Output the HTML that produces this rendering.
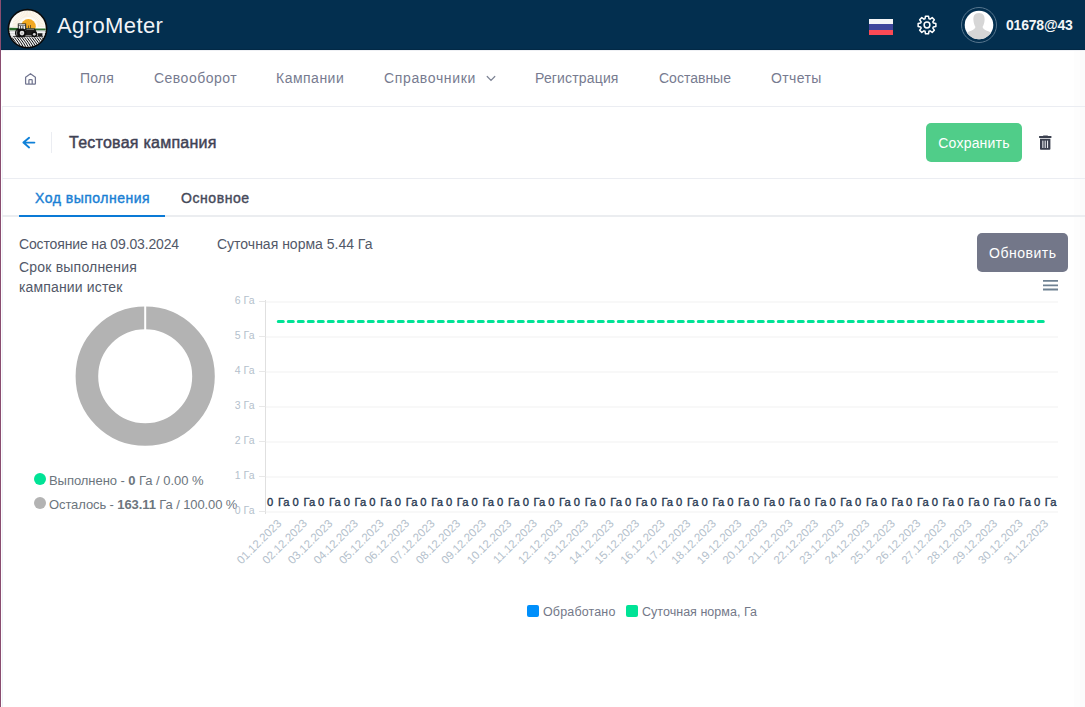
<!DOCTYPE html>
<html><head><meta charset="utf-8">
<style>
*{margin:0;padding:0;box-sizing:border-box}
html,body{width:1085px;height:707px;overflow:hidden;background:#fff;font-family:"Liberation Sans",sans-serif;position:relative}
.abs{position:absolute;white-space:nowrap}
#lb{position:absolute;left:0;top:0;width:1px;height:707px;background:#8a4d70;z-index:5}
#lb2{position:absolute;left:2px;top:107px;width:1px;height:600px;background:#eef2f7}
#rs1{position:absolute;left:1074px;top:50px;width:6px;height:657px;background:#fdfdfd}
#rs2{position:absolute;left:1080px;top:50px;width:5px;height:657px;background:#fbfbfb}
#hdr{position:absolute;left:1px;top:0;width:1084px;height:50px;background:#032f4f;border-bottom:1px solid #022946}
.brand{left:57px;top:12.5px;font-size:22px;letter-spacing:0.4px;color:#f2f4f7;line-height:26px}
.nav{top:70px;font-size:14px;color:#777b90;line-height:16px}
#navline{position:absolute;left:2px;top:106px;width:1083px;height:1px;background:#ebedf2}
#titleline{position:absolute;left:2px;top:178px;width:1083px;height:1px;background:#ebedf2}
#tabline{position:absolute;left:2px;top:215px;width:1083px;height:2px;background:#ebedf0}
#tabact{position:absolute;left:19px;top:215px;width:146px;height:2px;background:#0a7ad6}
.title{left:69px;top:134px;font-size:16px;font-weight:normal;-webkit-text-stroke:0.45px #3f4254;letter-spacing:0.25px;color:#3f4254;line-height:18px}
.tab{top:190px;font-size:14px;font-weight:normal;-webkit-text-stroke:0.4px currentColor;line-height:16px}
.btn{position:absolute;border-radius:5px;color:#fff;font-size:14px;text-align:center}
.txt{font-size:14px;color:#525868;line-height:16px}
.leg{font-size:13px;color:#6c757d;line-height:15px}
</style></head><body>
<div id="rs1"></div><div id="rs2"></div><div id="lb"></div><div id="lb2"></div>
<div id="hdr"></div><div class="abs" style="left:1px;top:50px;width:1084px;height:1px;background:#eef0f4"></div>
<!-- logo -->
<svg class="abs" style="left:7px;top:8px" width="42" height="42" viewBox="0 0 42 42">
  <defs><clipPath id="lc"><circle cx="20.5" cy="20.7" r="18.3"/></clipPath></defs>
  <circle cx="20.5" cy="20.7" r="19.9" fill="#0a0a0a"/>
  <g clip-path="url(#lc)">
    <rect x="0" y="0" width="42" height="23" fill="#fdfcf8"/>
    <path d="M12.0 18.4L5.4 18.4 M12.1 17.4L5.5 16.7 M12.2 16.4L5.8 15.0 M12.5 15.4L6.2 13.3 M12.9 14.5L6.9 11.7 M13.3 13.6L7.7 10.2 M13.9 12.7L8.7 8.7 M14.6 11.9L9.8 7.4 M15.3 11.2L11.0 6.2 M16.1 10.6L12.4 5.2 M17.0 10.1L13.9 4.3 M17.9 9.7L15.5 3.5 M18.9 9.3L17.1 3.0 M19.9 9.1L18.8 2.6 M20.9 9.0L20.5 2.4 M21.9 9.0L22.3 2.4 M22.9 9.1L24.0 2.6 M23.9 9.3L25.7 3.0 M24.9 9.7L27.3 3.5 M25.8 10.1L28.9 4.3 M26.7 10.6L30.4 5.2 M27.5 11.2L31.8 6.2 M28.2 11.9L33.0 7.4 M28.9 12.7L34.1 8.7 M29.5 13.6L35.1 10.2 M29.9 14.5L35.9 11.7 M30.3 15.4L36.6 13.3 M30.6 16.4L37.0 15.0 M30.7 17.4L37.3 16.7 M30.8 18.4L37.4 18.4" stroke="#eba555" stroke-width="0.55" opacity="0.3"/>
    <circle cx="21.4" cy="18.4" r="8.4" fill="#fdfcf8"/><circle cx="21.4" cy="18.4" r="7.4" fill="#f2a922"/>
    <path d="M0 19.8 L14 19.9 L28 20.6 L42 20.4 V23 H0z" fill="#2d6a2b"/>
    <rect x="0" y="22.3" width="42" height="7.2" fill="#dcdcdc"/>
    <path d="M0 24.5h42M0 26.8h42" stroke="#f6f6f6" stroke-width="0.9"/>
    <rect x="0" y="29" width="42" height="14" fill="#f2f2f2"/>
    <path d="M-10.0 29.5 Q-6.0 34 -2.0 42 M-7.5 29.5 Q-3.5 34 0.5 42 M-5.0 29.5 Q-1.0 34 3.0 42 M-2.5 29.5 Q1.5 34 5.5 42 M0.0 29.5 Q4.0 34 8.0 42 M2.5 29.5 Q6.5 34 10.5 42 M5.0 29.5 Q9.0 34 13.0 42 M7.5 29.5 Q11.5 34 15.5 42 M10.0 29.5 Q14.0 34 18.0 42 M12.5 29.5 Q16.5 34 20.5 42 M15.0 29.5 Q19.0 34 23.0 42 M17.5 29.5 Q21.5 34 25.5 42 M20.0 29.5 Q24.0 34 28.0 42 M22.5 29.5 Q26.5 34 30.5 42 M25.0 29.5 Q29.0 34 33.0 42 M27.5 29.5 Q31.5 34 35.5 42 M30.0 29.5 Q34.0 34 38.0 42 M32.5 29.5 Q36.5 34 40.5 42 M35.0 29.5 Q39.0 34 43.0 42 M37.5 29.5 Q41.5 34 45.5 42 M40.0 29.5 Q44.0 34 48.0 42 M42.5 29.5 Q46.5 34 50.5 42" stroke="#111" stroke-width="1.0" fill="none"/>
    <!-- tractor -->
    <path d="M10.8 15.4 H19.1 L19.3 22 H10.8z" fill="#141414"/>
    <path d="M11.6 16.3 H18.3 V17.4 H11.6z" fill="#f0f0f0"/>
    <path d="M11.7 17.9 H13.3 V21.3 H11.7z M14 17.9 H15.6 V21.3 H14z M16.3 17.9 H18.2 V21.3 H16.3z" fill="#e8e8e8"/>
    <path d="M21.5 17.5 V20.5 M23.5 17 V20.5" stroke="#222" stroke-width="0.6"/>
    <path d="M18.5 20.5 H27.5 Q29 21 29.2 23 L29.5 27.5 H18.5z" fill="#1c1c1c"/>
    <path d="M19.5 20.8 H27 V21.8 H19.5z" fill="#888"/>
    <ellipse cx="11.6" cy="25" rx="3.6" ry="4.6" fill="#0d0d0d"/>
    <path d="M10 22.5 Q9.2 25 10 27.5" stroke="#ccc" stroke-width="0.7" fill="none"/>
    <circle cx="15" cy="25.1" r="4.5" fill="#0d0d0d"/>
    <circle cx="15" cy="25.1" r="2.3" fill="#e2e2e2"/>
    <circle cx="15" cy="25.1" r="0.7" fill="#777"/>
    <circle cx="27.3" cy="26.3" r="3" fill="#0d0d0d"/>
    <circle cx="27.3" cy="26.3" r="1.4" fill="#d8d8d8"/>
    <path d="M30.8 25.2 H35.4 V28 H30.8z" fill="#1a1a1a"/>
    <path d="M6 28.6 H36" stroke="#111" stroke-width="0.8"/>
  </g>
</svg>
<div class="abs brand">AgroMeter</div>
<!-- flag -->
<div class="abs" style="left:869px;top:19px;width:24px;height:16px">
  <div style="height:5.33px;background:#f5f5f7"></div><div style="height:5.34px;background:#3f469c"></div><div style="height:5.33px;background:#fb4a55"></div>
</div>
<!-- gear -->
<svg class="abs" style="left:916px;top:14px" width="22" height="22" viewBox="0 0 22 22" fill="none" stroke="#ffffff" stroke-width="1.5" stroke-linejoin="round">
  <path d="M9.05 4.69 L9.48 2.13 L12.52 2.13 L12.95 4.69 L14.08 5.16 L16.20 3.65 L18.35 5.80 L16.84 7.92 L17.31 9.05 L19.87 9.48 L19.87 12.52 L17.31 12.95 L16.84 14.08 L18.35 16.20 L16.20 18.35 L14.08 16.84 L12.95 17.31 L12.52 19.87 L9.48 19.87 L9.05 17.31 L7.92 16.84 L5.80 18.35 L3.65 16.20 L5.16 14.08 L4.69 12.95 L2.13 12.52 L2.13 9.48 L4.69 9.05 L5.16 7.92 L3.65 5.80 L5.80 3.65 L7.92 5.16Z"/>
  <circle cx="11" cy="11" r="2.9"/>
</svg>
<!-- avatar -->
<div class="abs" style="left:961px;top:7px;width:36px;height:36px;border-radius:50%;border:1.3px solid #56758d"></div>
<svg class="abs" style="left:964px;top:10px" width="30" height="30" viewBox="0 0 30 30">
  <defs><clipPath id="ac"><circle cx="15" cy="15" r="14.3"/></clipPath></defs>
  <circle cx="15" cy="15" r="14.3" fill="#ffffff"/>
  <g clip-path="url(#ac)" fill="#d6d6d6">
    <path d="M15 3 C19.5 3 20.8 6 20.6 10 C20.4 13 19.5 15.5 18.5 17 C19 19 22 20.5 25 21.5 C27 22.5 28.5 25 29 30 L1 30 C1.5 25 3 22.5 5 21.5 C8 20.5 11 19 11.5 17 C10.5 15.5 9.6 13 9.4 10 C9.2 6 10.5 3 15 3Z"/>
  </g>
</svg>
<div class="abs" style="left:1006px;top:17px;font-size:14px;font-weight:bold;letter-spacing:-0.2px;color:#f4f6f8;line-height:16px">01678@43</div>

<!-- nav -->
<svg class="abs" style="left:24px;top:72px" width="13" height="14" viewBox="0 0 13 14" fill="none" stroke="#717590" stroke-width="1.25" stroke-linejoin="round">
  <path d="M1.6 5.2 L6.5 1.7 L11.4 5.2 V11.4 Q11.4 12 10.8 12 H2.2 Q1.6 12 1.6 11.4z"/><path d="M4.9 12 V8.4 Q4.9 7.7 5.6 7.7 H7.5 Q8.2 7.7 8.2 8.4 V12"/>
</svg>
<div class="abs nav" style="left:80px;letter-spacing:0.15px">Поля</div>
<div class="abs nav" style="left:154px;letter-spacing:0.48px">Севооборот</div>
<div class="abs nav" style="left:276px;letter-spacing:0.49px">Кампании</div>
<div class="abs nav" style="left:384px;letter-spacing:0.65px">Справочники</div>
<svg class="abs" style="left:485px;top:74px" width="12" height="10" viewBox="0 0 12 10" fill="none" stroke="#7d8394" stroke-width="1.2" stroke-linecap="round"><path d="M2.2 2.5 L6 6.5 L9.8 2.5"/></svg>
<div class="abs nav" style="left:535px;letter-spacing:0.16px">Регистрация</div>
<div class="abs nav" style="left:659px">Составные</div>
<div class="abs nav" style="left:771px;letter-spacing:0.4px">Отчеты</div>
<div id="navline"></div>

<!-- title row -->
<svg class="abs" style="left:21px;top:136px" width="15" height="14" viewBox="0 0 15 14" fill="none" stroke="#0f80d8" stroke-width="1.9" stroke-linecap="round" stroke-linejoin="round"><path d="M13.4 6.6 H2.6 M8.1 1.8 L2.4 6.6 L8.1 11.4"/></svg>
<div class="abs" style="left:51px;top:132px;width:1px;height:21px;background:#ebedf2"></div>
<div class="abs title">Тестовая кампания</div>
<div class="btn" style="left:926px;top:123px;width:96px;height:39px;background:#50cd89;line-height:41px;letter-spacing:0.2px">Сохранить</div>
<svg class="abs" style="left:1038px;top:135px" width="15" height="16" viewBox="0 0 15 16" fill="#3a3f4e">
  <path d="M5.4 0.4 H9.6 L10 1 H13.4 V3 H1.1 V1 H5z"/>
  <path d="M2 3.8 H12.4 V13.9 Q12.4 14.7 11.6 14.7 H2.8 Q2 14.7 2 13.9z"/>
  <g fill="#e9ebef"><rect x="4.3" y="5.6" width="1.1" height="7.4"/><rect x="6.65" y="5.6" width="1.1" height="7.4"/><rect x="9" y="5.6" width="1.1" height="7.4"/></g>
</svg>
<div id="titleline"></div>

<!-- tabs -->
<div class="abs tab" style="left:35px;color:#1a7fd4;letter-spacing:0.5px">Ход выполнения</div>
<div class="abs tab" style="left:181px;color:#464a5a;letter-spacing:0.57px">Основное</div>
<div id="tabline"></div>
<div id="tabact"></div>

<!-- content -->
<div class="abs txt" style="left:19px;top:236px;letter-spacing:-0.14px">Состояние на 09.03.2024</div>
<div class="abs txt" style="left:19px;top:259px;letter-spacing:0.2px">Срок выполнения</div>
<div class="abs txt" style="left:19px;top:279px;letter-spacing:0.15px">кампании истек</div>
<div class="abs txt" style="left:217px;top:236px">Суточная норма 5.44 Га</div>
<div class="btn" style="left:977px;top:233px;width:91px;height:39px;background:#737789;line-height:41px;letter-spacing:0.5px;text-indent:0.5px">Обновить</div>

<!-- donut -->
<svg class="abs" style="left:70px;top:301.4px" width="150" height="150" viewBox="0 0 150 150">
  <circle cx="75.2" cy="75.2" r="58.3" fill="none" stroke="#b3b3b3" stroke-width="22.6"/>
  <line x1="75.2" y1="4" x2="75.2" y2="30" stroke="#fff" stroke-width="2"/>
</svg>
<div class="abs" style="left:34px;top:473px;width:12px;height:12px;border-radius:50%;background:#00e396"></div>
<div class="abs leg" style="left:49px;top:473px;letter-spacing:-0.05px">Выполнено - <b>0</b> Га / 0.00 %</div>
<div class="abs" style="left:34px;top:497px;width:12px;height:12px;border-radius:50%;background:#b3b3b3"></div>
<div class="abs leg" style="left:49px;top:497px;letter-spacing:-0.1px">Осталось - <b>163.11</b> Га / 100.00 %</div>

<!-- chart -->
<svg id="chart" class="abs" style="left:0;top:0" width="1085" height="707">
<line x1="265.5" y1="512.0" x2="1058" y2="512.0" stroke="#f1f1f1" stroke-width="1"/>
<line x1="265.5" y1="477.0" x2="1058" y2="477.0" stroke="#f1f1f1" stroke-width="1"/>
<line x1="265.5" y1="442.0" x2="1058" y2="442.0" stroke="#f1f1f1" stroke-width="1"/>
<line x1="265.5" y1="407.0" x2="1058" y2="407.0" stroke="#f1f1f1" stroke-width="1"/>
<line x1="265.5" y1="372.0" x2="1058" y2="372.0" stroke="#f1f1f1" stroke-width="1"/>
<line x1="265.5" y1="337.0" x2="1058" y2="337.0" stroke="#f1f1f1" stroke-width="1"/>
<line x1="265.5" y1="302.0" x2="1058" y2="302.0" stroke="#f1f1f1" stroke-width="1"/>
<line x1="265.5" y1="300.0" x2="265.5" y2="514.0" stroke="#e0e0e0" stroke-width="1"/>
<line x1="259" y1="511.5" x2="265.5" y2="511.5" stroke="#e8e8e8" stroke-width="1"/>
<text x="254.5" y="514.0" text-anchor="end" font-size="10.5" fill="#b4bfcc">0 Га</text>
<line x1="259" y1="476.5" x2="265.5" y2="476.5" stroke="#e8e8e8" stroke-width="1"/>
<text x="254.5" y="479.0" text-anchor="end" font-size="10.5" fill="#b4bfcc">1 Га</text>
<line x1="259" y1="441.5" x2="265.5" y2="441.5" stroke="#e8e8e8" stroke-width="1"/>
<text x="254.5" y="444.0" text-anchor="end" font-size="10.5" fill="#b4bfcc">2 Га</text>
<line x1="259" y1="406.5" x2="265.5" y2="406.5" stroke="#e8e8e8" stroke-width="1"/>
<text x="254.5" y="409.0" text-anchor="end" font-size="10.5" fill="#b4bfcc">3 Га</text>
<line x1="259" y1="371.5" x2="265.5" y2="371.5" stroke="#e8e8e8" stroke-width="1"/>
<text x="254.5" y="374.0" text-anchor="end" font-size="10.5" fill="#b4bfcc">4 Га</text>
<line x1="259" y1="336.5" x2="265.5" y2="336.5" stroke="#e8e8e8" stroke-width="1"/>
<text x="254.5" y="339.0" text-anchor="end" font-size="10.5" fill="#b4bfcc">5 Га</text>
<line x1="259" y1="301.5" x2="265.5" y2="301.5" stroke="#e8e8e8" stroke-width="1"/>
<text x="254.5" y="304.0" text-anchor="end" font-size="10.5" fill="#b4bfcc">6 Га</text>
<text x="278.28" y="505.8" text-anchor="middle" font-size="11.2" fill="#263750" stroke="#263750" stroke-width="0.35" style="word-spacing:1.6px">0 Га</text>
<text x="303.85" y="505.8" text-anchor="middle" font-size="11.2" fill="#263750" stroke="#263750" stroke-width="0.35" style="word-spacing:1.6px">0 Га</text>
<text x="329.41" y="505.8" text-anchor="middle" font-size="11.2" fill="#263750" stroke="#263750" stroke-width="0.35" style="word-spacing:1.6px">0 Га</text>
<text x="354.98" y="505.8" text-anchor="middle" font-size="11.2" fill="#263750" stroke="#263750" stroke-width="0.35" style="word-spacing:1.6px">0 Га</text>
<text x="380.54" y="505.8" text-anchor="middle" font-size="11.2" fill="#263750" stroke="#263750" stroke-width="0.35" style="word-spacing:1.6px">0 Га</text>
<text x="406.10" y="505.8" text-anchor="middle" font-size="11.2" fill="#263750" stroke="#263750" stroke-width="0.35" style="word-spacing:1.6px">0 Га</text>
<text x="431.67" y="505.8" text-anchor="middle" font-size="11.2" fill="#263750" stroke="#263750" stroke-width="0.35" style="word-spacing:1.6px">0 Га</text>
<text x="457.23" y="505.8" text-anchor="middle" font-size="11.2" fill="#263750" stroke="#263750" stroke-width="0.35" style="word-spacing:1.6px">0 Га</text>
<text x="482.80" y="505.8" text-anchor="middle" font-size="11.2" fill="#263750" stroke="#263750" stroke-width="0.35" style="word-spacing:1.6px">0 Га</text>
<text x="508.36" y="505.8" text-anchor="middle" font-size="11.2" fill="#263750" stroke="#263750" stroke-width="0.35" style="word-spacing:1.6px">0 Га</text>
<text x="533.93" y="505.8" text-anchor="middle" font-size="11.2" fill="#263750" stroke="#263750" stroke-width="0.35" style="word-spacing:1.6px">0 Га</text>
<text x="559.49" y="505.8" text-anchor="middle" font-size="11.2" fill="#263750" stroke="#263750" stroke-width="0.35" style="word-spacing:1.6px">0 Га</text>
<text x="585.06" y="505.8" text-anchor="middle" font-size="11.2" fill="#263750" stroke="#263750" stroke-width="0.35" style="word-spacing:1.6px">0 Га</text>
<text x="610.62" y="505.8" text-anchor="middle" font-size="11.2" fill="#263750" stroke="#263750" stroke-width="0.35" style="word-spacing:1.6px">0 Га</text>
<text x="636.19" y="505.8" text-anchor="middle" font-size="11.2" fill="#263750" stroke="#263750" stroke-width="0.35" style="word-spacing:1.6px">0 Га</text>
<text x="661.75" y="505.8" text-anchor="middle" font-size="11.2" fill="#263750" stroke="#263750" stroke-width="0.35" style="word-spacing:1.6px">0 Га</text>
<text x="687.31" y="505.8" text-anchor="middle" font-size="11.2" fill="#263750" stroke="#263750" stroke-width="0.35" style="word-spacing:1.6px">0 Га</text>
<text x="712.88" y="505.8" text-anchor="middle" font-size="11.2" fill="#263750" stroke="#263750" stroke-width="0.35" style="word-spacing:1.6px">0 Га</text>
<text x="738.44" y="505.8" text-anchor="middle" font-size="11.2" fill="#263750" stroke="#263750" stroke-width="0.35" style="word-spacing:1.6px">0 Га</text>
<text x="764.01" y="505.8" text-anchor="middle" font-size="11.2" fill="#263750" stroke="#263750" stroke-width="0.35" style="word-spacing:1.6px">0 Га</text>
<text x="789.57" y="505.8" text-anchor="middle" font-size="11.2" fill="#263750" stroke="#263750" stroke-width="0.35" style="word-spacing:1.6px">0 Га</text>
<text x="815.14" y="505.8" text-anchor="middle" font-size="11.2" fill="#263750" stroke="#263750" stroke-width="0.35" style="word-spacing:1.6px">0 Га</text>
<text x="840.70" y="505.8" text-anchor="middle" font-size="11.2" fill="#263750" stroke="#263750" stroke-width="0.35" style="word-spacing:1.6px">0 Га</text>
<text x="866.27" y="505.8" text-anchor="middle" font-size="11.2" fill="#263750" stroke="#263750" stroke-width="0.35" style="word-spacing:1.6px">0 Га</text>
<text x="891.83" y="505.8" text-anchor="middle" font-size="11.2" fill="#263750" stroke="#263750" stroke-width="0.35" style="word-spacing:1.6px">0 Га</text>
<text x="917.40" y="505.8" text-anchor="middle" font-size="11.2" fill="#263750" stroke="#263750" stroke-width="0.35" style="word-spacing:1.6px">0 Га</text>
<text x="942.96" y="505.8" text-anchor="middle" font-size="11.2" fill="#263750" stroke="#263750" stroke-width="0.35" style="word-spacing:1.6px">0 Га</text>
<text x="968.52" y="505.8" text-anchor="middle" font-size="11.2" fill="#263750" stroke="#263750" stroke-width="0.35" style="word-spacing:1.6px">0 Га</text>
<text x="994.09" y="505.8" text-anchor="middle" font-size="11.2" fill="#263750" stroke="#263750" stroke-width="0.35" style="word-spacing:1.6px">0 Га</text>
<text x="1019.65" y="505.8" text-anchor="middle" font-size="11.2" fill="#263750" stroke="#263750" stroke-width="0.35" style="word-spacing:1.6px">0 Га</text>
<text x="1045.22" y="505.8" text-anchor="middle" font-size="11.2" fill="#263750" stroke="#263750" stroke-width="0.35" style="word-spacing:1.6px">0 Га</text>
<text x="282.18" y="524.1" text-anchor="end" font-size="11.5" fill="#b4bfcc" transform="rotate(-45 282.18 524.1)">01.12.2023</text>
<text x="307.75" y="524.1" text-anchor="end" font-size="11.5" fill="#b4bfcc" transform="rotate(-45 307.75 524.1)">02.12.2023</text>
<text x="333.31" y="524.1" text-anchor="end" font-size="11.5" fill="#b4bfcc" transform="rotate(-45 333.31 524.1)">03.12.2023</text>
<text x="358.88" y="524.1" text-anchor="end" font-size="11.5" fill="#b4bfcc" transform="rotate(-45 358.88 524.1)">04.12.2023</text>
<text x="384.44" y="524.1" text-anchor="end" font-size="11.5" fill="#b4bfcc" transform="rotate(-45 384.44 524.1)">05.12.2023</text>
<text x="410.00" y="524.1" text-anchor="end" font-size="11.5" fill="#b4bfcc" transform="rotate(-45 410.00 524.1)">06.12.2023</text>
<text x="435.57" y="524.1" text-anchor="end" font-size="11.5" fill="#b4bfcc" transform="rotate(-45 435.57 524.1)">07.12.2023</text>
<text x="461.13" y="524.1" text-anchor="end" font-size="11.5" fill="#b4bfcc" transform="rotate(-45 461.13 524.1)">08.12.2023</text>
<text x="486.70" y="524.1" text-anchor="end" font-size="11.5" fill="#b4bfcc" transform="rotate(-45 486.70 524.1)">09.12.2023</text>
<text x="512.26" y="524.1" text-anchor="end" font-size="11.5" fill="#b4bfcc" transform="rotate(-45 512.26 524.1)">10.12.2023</text>
<text x="537.83" y="524.1" text-anchor="end" font-size="11.5" fill="#b4bfcc" transform="rotate(-45 537.83 524.1)">11.12.2023</text>
<text x="563.39" y="524.1" text-anchor="end" font-size="11.5" fill="#b4bfcc" transform="rotate(-45 563.39 524.1)">12.12.2023</text>
<text x="588.96" y="524.1" text-anchor="end" font-size="11.5" fill="#b4bfcc" transform="rotate(-45 588.96 524.1)">13.12.2023</text>
<text x="614.52" y="524.1" text-anchor="end" font-size="11.5" fill="#b4bfcc" transform="rotate(-45 614.52 524.1)">14.12.2023</text>
<text x="640.09" y="524.1" text-anchor="end" font-size="11.5" fill="#b4bfcc" transform="rotate(-45 640.09 524.1)">15.12.2023</text>
<text x="665.65" y="524.1" text-anchor="end" font-size="11.5" fill="#b4bfcc" transform="rotate(-45 665.65 524.1)">16.12.2023</text>
<text x="691.21" y="524.1" text-anchor="end" font-size="11.5" fill="#b4bfcc" transform="rotate(-45 691.21 524.1)">17.12.2023</text>
<text x="716.78" y="524.1" text-anchor="end" font-size="11.5" fill="#b4bfcc" transform="rotate(-45 716.78 524.1)">18.12.2023</text>
<text x="742.34" y="524.1" text-anchor="end" font-size="11.5" fill="#b4bfcc" transform="rotate(-45 742.34 524.1)">19.12.2023</text>
<text x="767.91" y="524.1" text-anchor="end" font-size="11.5" fill="#b4bfcc" transform="rotate(-45 767.91 524.1)">20.12.2023</text>
<text x="793.47" y="524.1" text-anchor="end" font-size="11.5" fill="#b4bfcc" transform="rotate(-45 793.47 524.1)">21.12.2023</text>
<text x="819.04" y="524.1" text-anchor="end" font-size="11.5" fill="#b4bfcc" transform="rotate(-45 819.04 524.1)">22.12.2023</text>
<text x="844.60" y="524.1" text-anchor="end" font-size="11.5" fill="#b4bfcc" transform="rotate(-45 844.60 524.1)">23.12.2023</text>
<text x="870.17" y="524.1" text-anchor="end" font-size="11.5" fill="#b4bfcc" transform="rotate(-45 870.17 524.1)">24.12.2023</text>
<text x="895.73" y="524.1" text-anchor="end" font-size="11.5" fill="#b4bfcc" transform="rotate(-45 895.73 524.1)">25.12.2023</text>
<text x="921.30" y="524.1" text-anchor="end" font-size="11.5" fill="#b4bfcc" transform="rotate(-45 921.30 524.1)">26.12.2023</text>
<text x="946.86" y="524.1" text-anchor="end" font-size="11.5" fill="#b4bfcc" transform="rotate(-45 946.86 524.1)">27.12.2023</text>
<text x="972.42" y="524.1" text-anchor="end" font-size="11.5" fill="#b4bfcc" transform="rotate(-45 972.42 524.1)">28.12.2023</text>
<text x="997.99" y="524.1" text-anchor="end" font-size="11.5" fill="#b4bfcc" transform="rotate(-45 997.99 524.1)">29.12.2023</text>
<text x="1023.55" y="524.1" text-anchor="end" font-size="11.5" fill="#b4bfcc" transform="rotate(-45 1023.55 524.1)">30.12.2023</text>
<text x="1049.12" y="524.1" text-anchor="end" font-size="11.5" fill="#b4bfcc" transform="rotate(-45 1049.12 524.1)">31.12.2023</text>
<line x1="278.28" y1="321.5" x2="1045.22" y2="321.5" stroke="#00e396" stroke-width="3" stroke-dasharray="5 5" stroke-linecap="round"/>
</svg>
<!-- menu icon -->
<svg class="abs" style="left:1042px;top:279px" width="17" height="12" viewBox="0 0 17 12" stroke="#6e8192" stroke-width="1.8"><path d="M1 1.9H16M1 6.3H16M1 10.5H16"/></svg>

<!-- legend -->
<div class="abs" style="left:527px;top:605px;width:12px;height:12px;border-radius:2px;background:#008ffb"></div>
<div class="abs leg" style="left:543px;top:605px;color:#737888;font-size:12.5px;letter-spacing:0.15px">Обработано</div>
<div class="abs" style="left:626px;top:605px;width:12px;height:12px;border-radius:2px;background:#00e396"></div>
<div class="abs leg" style="left:642px;top:605px;color:#737888;font-size:12.5px;letter-spacing:0.03px">Суточная норма, Га</div>
</body></html>
